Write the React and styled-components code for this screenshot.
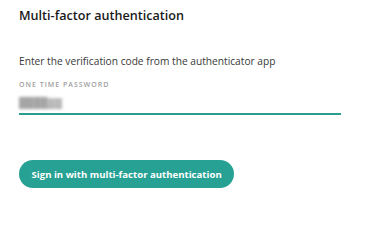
import styled, { createGlobalStyle } from "styled-components";

const GlobalStyle = createGlobalStyle`
  html, body {
    margin: 0;
    padding: 0;
    background: #ffffff;
  }
  body {
    font-family: "Open Sans", "Liberation Sans", sans-serif;
    color: #222;
  }
`;

const Page = styled.main`
  width: 372px;
  height: 200px;
  box-sizing: border-box;
  padding: 8px 31px 0 19px;
  display: flex;
  flex-direction: column;
`;

const Title = styled.h1`
  margin: 0;
  font-size: 12.6px;
  font-weight: 600;
  line-height: 16px;
  color: #1a1a1a;
`;

const Form = styled.form`
  display: flex;
  flex-direction: column;
  margin-top: 30px;
`;

const Hint = styled.p`
  margin: 0;
  font-size: 10.2px;
  line-height: 14px;
  color: #383838;
`;

const Field = styled.label`
  display: flex;
  flex-direction: column;
  margin-top: 12px;
`;

const FieldLabel = styled.span`
  font-size: 7px;
  line-height: 10px;
  letter-spacing: 1px;
  font-weight: 600;
  color: #a0a0a0;
  text-transform: uppercase;
`;

const InputWrap = styled.div`
  position: relative;
  display: flex;
  flex-direction: column;
`;

const Input = styled.input`
  margin-top: 3px;
  height: 18px;
  padding: 0 0 2px 0;
  border: none;
  border-bottom: 2px solid #2a9d8f;
  outline: none;
  background: transparent;
  font-family: inherit;
  font-size: 11px;
  color: #8a8a8a;
`;

const Blurred = styled.span`
  position: absolute;
  left: 0;
  top: 5px;
  font-size: 10px;
  color: #a5a5a5;
  filter: blur(1.6px);
  pointer-events: none;
`;

const SubmitButton = styled.button`
  margin-top: 45px;
  align-self: flex-start;
  height: 28px;
  padding: 0 12.5px;
  border: none;
  border-radius: 14px;
  background: #26a193;
  color: #ffffff;
  font-family: inherit;
  font-size: 9.6px;
  font-weight: 700;
  cursor: pointer;
  &:hover {
    background: #1f8b7f;
  }
`;

function App() {
  return (
    <>
      <GlobalStyle />
      <Page>
        <Title>Multi-factor authentication</Title>
        <Form onSubmit={(e) => e.preventDefault()}>
          <Hint>Enter the verification code from the authenticator app</Hint>
          <Field>
            <FieldLabel>One time password</FieldLabel>
            <InputWrap>
              <Input type="text" aria-label="One time password" />
              <Blurred>████▓▓</Blurred>
            </InputWrap>
          </Field>
          <SubmitButton type="submit">Sign in with multi-factor authentication</SubmitButton>
        </Form>
      </Page>
    </>
  );
}

export default App;
